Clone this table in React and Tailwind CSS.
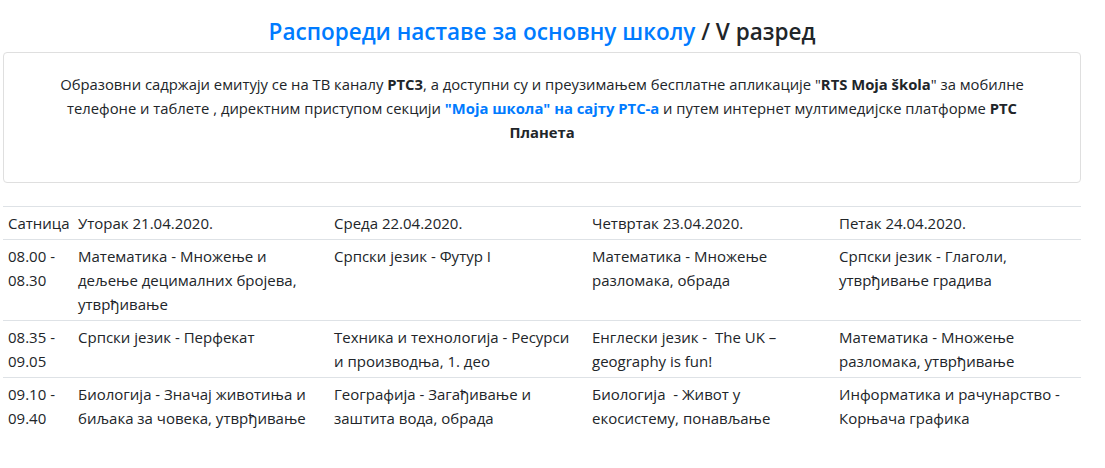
const rows = [
  {
    time: ['08.00 -', '08.30'],
    cells: [
      'Математика - Множење и дељење децималних бројева, утврђивање',
      'Српски језик - Футур I',
      'Математика - Множење разломака, обрада',
      'Српски језик - Глаголи, утврђивање градива',
    ],
  },
  {
    time: ['08.35 -', '09.05'],
    cells: [
      'Српски језик - Перфекат',
      'Техника и технологија - Ресурси и производња, 1. део',
      'Енглески језик -  The UK – geography is fun!',
      'Математика - Множење разломака, утврђивање',
    ],
  },
  {
    time: ['09.10 -', '09.40'],
    cells: [
      'Биологија - Значај животиња и биљака за човека, утврђивање',
      'Географија - Загађивање и заштита вода, обрада',
      'Биологија  - Живот у екосистему, понављање',
      'Информатика и рачунарство - Корњача графика',
    ],
  },
];

const days = ['Уторак 21.04.2020.', 'Среда 22.04.2020.', 'Четвртак 23.04.2020.', 'Петак 24.04.2020.'];

export default function App() {
  return (
    <div className="min-h-screen bg-white text-[#212529] font-['Open_Sans',sans-serif] pt-[18px]">
      <div className="w-[1078px] ml-[3px]">
        {/* naslov */}
        <h4 className="text-center text-[22.5px] leading-[28px] font-semibold mb-[6px]">
          <a href="#" className="text-[#007bff]">Распореди наставе за основну школу</a> / V разред
        </h4>

        {/* kartica */}
        <div className="border border-[#dfdfdf] rounded-[4px] px-5 pt-[19px] pb-[38px] text-center text-[14.8px] leading-6">
          <p>
            Образовни садржаји емитују се на ТВ каналу <strong>РТС3</strong>, а доступни су и преузимањем бесплатне апликације "<strong>RTS Moja škola</strong>" за мобилне
            <br />
            телефоне и таблете , директним приступом секцији <a href="#" className="text-[#007bff] font-bold">"Моја школа" на сајту РТС-а</a> и путем интернет мултимедијске платформе <strong>РТС</strong>
            <br />
            <strong>Планета</strong>
          </p>
        </div>

        {/* tabela */}
        <table className="w-full table-fixed mt-[23px] text-[15px] leading-6 border-collapse">
          <colgroup>
            <col className="w-[70px]" />
            <col className="w-[256px]" />
            <col className="w-[258px]" />
            <col className="w-[247px]" />
            <col className="w-[247px]" />
          </colgroup>
          <tbody>
            <tr className="border-t border-[#dee2e6]">
              <td className="px-[5px] py-1 align-top whitespace-nowrap">Сатница</td>
              {days.map((d) => (
                <td key={d} className="px-[5px] py-1 align-top">{d}</td>
              ))}
            </tr>
            {rows.map((r, i) => (
              <tr key={i} className="border-t border-[#dee2e6]">
                <td className="px-[5px] py-1 align-top">
                  {r.time[0]}
                  <br />
                  {r.time[1]}
                </td>
                {r.cells.map((c, j) => (
                  <td key={j} className="px-[5px] py-1 align-top whitespace-pre-wrap">{c}</td>
                ))}
              </tr>
            ))}
          </tbody>
        </table>
      </div>
    </div>
  );
}
